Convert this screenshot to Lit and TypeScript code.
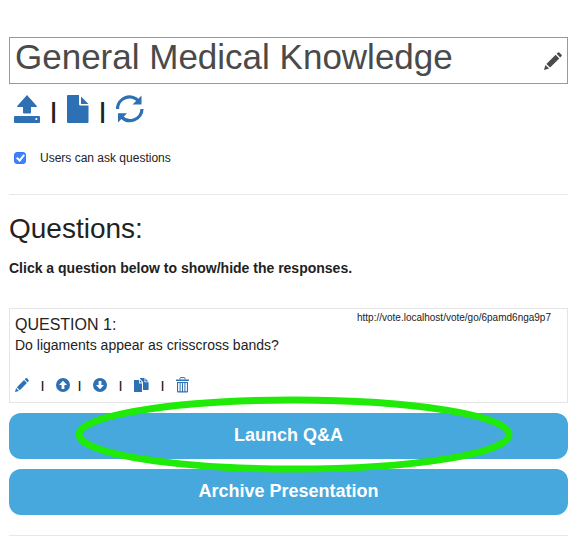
import { LitElement, html, svg, css } from "lit";
import { customElement, property, state } from "lit/decorators.js";

const pencil = svg`
  <path d="M0 18 1.4 12.9 5.1 16.6Z"/>
  <path d="M2.4 11.9 11.6 2.7 15.3 6.4 6.1 15.6Z"/>
  <path d="M12.6 1.8 14 .4Q14.6-.1 15.2.4L17.6 2.8Q18.1 3.4 17.6 4L16.2 5.4Z"/>`;

const icons: Record<string, { box: string; art: unknown }> = {
  pencil: { box: "0 0 18 18", art: pencil },
  upload: {
    box: "0 0 26 28",
    art: svg`
      <path d="M13 0 23 11.3Q23.2 12 22.3 12H17V17.5Q17 18.5 16 18.5H10Q9 18.5 9 17.5V12H3.7Q2.8 12 3 11.3Z"/>
      <path fill-rule="evenodd" d="M1 21H25Q26 21 26 22V27Q26 28 25 28H1Q0 28 0 27V22Q0 21 1 21ZM21.500 23V25H23.200V23Z"/>`,
  },
  file: {
    box: "0 0 22 28",
    art: svg`
      <path d="M1 0H12V9Q12 10.500 13.500 10.500H21.500V27Q21.500 28 20.500 28H1Q0 28 0 27V1Q0 0 1 0Z"/>
      <path d="M14 1.500 21.500 9H14Z"/>`,
  },
  refresh: {
    box: "0 0 28 28",
    art: svg`
      <path d="M1.500 14A12 12 0 0 1 22.500 6M26 14A12 12 0 0 1 5.500 22" fill="none" stroke="currentColor" stroke-width="3.200"/>
      <path d="M25.500.5V9.500H16.500ZM2 27.500V18.300H11Z"/>`,
  },
  up: {
    box: "0 0 14 14",
    art: svg`<path fill-rule="evenodd" d="M7 0A7 7 0 1 1 7 14 7 7 0 0 1 7 0ZM7 2.800 3 7H5.600V11H8.400V7H11Z"/>`,
  },
  down: {
    box: "0 0 14 14",
    art: svg`<path fill-rule="evenodd" d="M7 0A7 7 0 1 1 7 14 7 7 0 0 1 7 0ZM7 11.200 3 7H5.600V3H8.400V7H11Z"/>`,
  },
  copy: {
    box: "0 0 15 14",
    art: svg`
      <path d="M0 2H5.200V5.500H8V14H0Z"/>
      <path d="M6 2 8 4.600H6Z"/>
      <path d="M6 0H10.500V4.300H14.600V12H9V4L6 .8Z"/>
      <path d="M11.300.5 14.300 3.500H11.300Z"/>`,
  },
  trash: {
    box: "0 0 13 16",
    art: svg`
      <path d="M4 2.500V1.200Q4 .6 4.700.6H8.300Q9 .6 9 1.200V2.500" fill="none" stroke="currentColor"/>
      <path d="M0 2.500H13V4H0Z"/>
      <path fill-rule="evenodd" d="M1 5H12V14.500Q12 15.500 11 15.500H2Q1 15.500 1 14.500ZM2.100 6V14.300H3.600V6ZM4.600 6V14.300H6V6ZM7 6V14.300H8.400V6ZM9.400 6V14.300H10.900V6Z"/>`,
  },
};

@customElement("icon-button")
class IconButton extends LitElement {
  @property() name = "pencil";
  @property() label = "";

  static styles = css`
    :host {
      display: block;
    }
    .button {
      display: block;
      width: 100%;
      height: 100%;
      padding: 0;
      border: 0;
      background: none;
      color: inherit;
      cursor: pointer;
    }
    .glyph {
      display: block;
      width: 100%;
      height: 100%;
      fill: currentColor;
    }
  `;

  render() {
    const icon = icons[this.name];
    return html`<button class="button" type="button" aria-label=${this.label}>
      <svg class="glyph" viewBox=${icon.box} aria-hidden="true">${icon.art}</svg>
    </button>`;
  }
}

@customElement("app-root")
class AppRoot extends LitElement {
  @state() private open = true;

  static styles = css`
    :host {
      display: block;
      box-sizing: border-box;
      padding: 37px 20px 0 9px;
      background: #fff;
      color: #222;
      font-family: "Liberation Sans", Arial, sans-serif;
      font-size: 14px;
      line-height: 20px;
    }
    .title-box {
      display: flex;
      align-items: center;
      justify-content: space-between;
      padding: 0 5px;
      border: 1px solid #999;
      color: #4a4a4a;
    }
    .title {
      margin: 0;
      padding-bottom: 7px;
      font-size: 35px;
      font-weight: 400;
      line-height: 38px;
    }
    .edit {
      width: 18px;
      height: 18px;
    }
    .tools,
    .actions {
      display: flex;
      align-items: center;
      color: #2d70b3;
    }
    .tools {
      gap: 11px;
      margin-top: 11px;
      padding-left: 5px;
    }
    .tool {
      width: 28px;
      height: 28px;
    }
    .upload {
      width: 26px;
    }
    .file {
      width: 22px;
    }
    .bar {
      display: flex;
      justify-content: center;
      width: 5px;
      padding-top: 4px;
      color: #222;
      font-size: 22px;
      font-weight: 700;
      line-height: 24px;
    }
    .option {
      display: flex;
      align-items: center;
      gap: 14px;
      margin-top: 25px;
      padding-left: 5px;
      font-size: 12px;
    }
    .check {
      appearance: none;
      display: grid;
      place-items: center;
      box-sizing: border-box;
      width: 12px;
      height: 12px;
      margin: 0;
      border: 1px solid #aaa;
      border-radius: 3px;
    }
    .check:checked {
      border-color: #3478f6;
      background: #3b82fb;
    }
    .check:checked::before {
      content: "";
      box-sizing: border-box;
      width: 5px;
      height: 8px;
      margin-bottom: 2px;
      border: solid #fff;
      border-width: 0 2px 2px 0;
      transform: rotate(40deg);
    }
    .rule {
      height: 1px;
      margin: 0;
      border: 0;
      background: #e8e8e8;
    }
    .top-rule {
      margin-top: 26px;
    }
    .heading {
      margin: 18px 0 13px;
      font-size: 28px;
      font-weight: 400;
      line-height: 32px;
    }
    .hint {
      margin: 0 0 30px;
      font-weight: 700;
    }
    .card {
      padding: 0 16px 9px 5px;
      border: 1px solid #e5e5e5;
    }
    .card-head {
      display: flex;
      align-items: flex-start;
      justify-content: space-between;
    }
    .question {
      padding: 6px 0 0;
      border: 0;
      background: none;
      color: inherit;
      font: inherit;
      text-align: left;
      cursor: pointer;
    }
    .number {
      display: block;
      font-size: 16px;
    }
    .link {
      padding-top: 3px;
      color: inherit;
      font-size: 10px;
      line-height: 12px;
      text-decoration: none;
    }
    .actions {
      gap: 12px;
      margin-top: 22px;
    }
    .action {
      width: 14px;
      height: 14px;
    }
    .up {
      margin-right: -4px;
    }
    .copy {
      width: 15px;
    }
    .trash {
      width: 13px;
      height: 16px;
    }
    .small {
      width: 3px;
      padding-top: 0;
      font-size: 11px;
      line-height: 16px;
    }
    .launch {
      position: relative;
      margin: 10px 0;
    }
    .wide {
      display: block;
      width: 100%;
      padding: 11px 12px 13px;
      border: 0;
      border-radius: 12px;
      background: #46a8dc;
      color: #fff;
      font: 700 18px/22px "Liberation Sans", Arial, sans-serif;
      cursor: pointer;
    }
    .ring {
      position: absolute;
      top: -13px;
      bottom: -10px;
      left: 12%;
      right: 10%;
      padding: 0 3px;
      pointer-events: none;
    }
    .ring-art {
      display: block;
      width: 100%;
      height: 100%;
      overflow: visible;
      fill: none;
      stroke: #20ea08;
      stroke-width: 7px;
    }
    .end-rule {
      margin-top: 20px;
    }
  `;

  render() {
    const small = html`<span class="bar small">|</span>`;
    return html`
      <header class="title-box">
        <h1 class="title">General Medical Knowledge</h1>
        <icon-button class="edit" name="pencil" label="Edit title"></icon-button>
      </header>
      <nav class="tools">
        <icon-button class="tool upload" name="upload" label="Upload"></icon-button>
        <span class="bar">|</span>
        <icon-button class="tool file" name="file" label="New file"></icon-button>
        <span class="bar">|</span>
        <icon-button class="tool" name="refresh" label="Refresh"></icon-button>
      </nav>
      <div class="option">
        <input class="check" id="ask" type="checkbox" checked />
        <label for="ask">Users can ask questions</label>
      </div>
      <hr class="rule top-rule" />
      <h2 class="heading">Questions:</h2>
      <p class="hint">Click a question below to show/hide the responses.</p>
      <section class="card">
        <div class="card-head">
          <button
            class="question"
            type="button"
            aria-expanded=${this.open ? "true" : "false"}
            @click=${() => (this.open = !this.open)}
          >
            <span class="number">QUESTION 1:</span>
            Do ligaments appear as crisscross bands?
          </button>
          <a class="link" href="http://vote.localhost/vote/go/6pamd6nga9p7">http://vote.localhost/vote/go/6pamd6nga9p7</a>
        </div>
        <div class="actions">
          <icon-button class="action" name="pencil" label="Edit question"></icon-button>
          ${small}
          <icon-button class="action up" name="up" label="Move up"></icon-button>
          ${small}
          <icon-button class="action" name="down" label="Move down"></icon-button>
          ${small}
          <icon-button class="action copy" name="copy" label="Duplicate"></icon-button>
          ${small}
          <icon-button class="action trash" name="trash" label="Delete"></icon-button>
        </div>
      </section>
      <div class="launch">
        <button class="wide" type="button">Launch Q&amp;A</button>
        <div class="ring">
          <svg class="ring-art" aria-hidden="true">
            <ellipse cx="50%" cy="50%" rx="50%" ry="50%" />
          </svg>
        </div>
      </div>
      <button class="wide" type="button">Archive Presentation</button>
      <hr class="rule end-rule" />
    `;
  }
}
